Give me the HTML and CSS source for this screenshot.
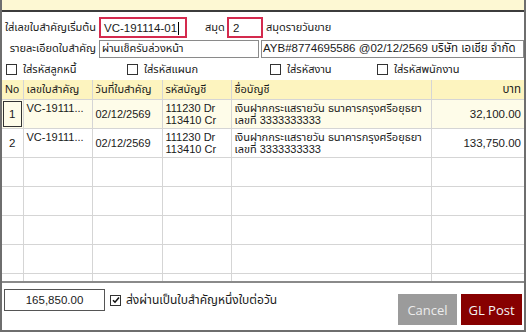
FILE: index.html
```html
<!DOCTYPE html>
<html lang="th">
<head>
  <meta charset="UTF-8" />
  <title>GL Post</title>
  <link rel="stylesheet" href="styles.css">
</head>
<body>
  <div class="window">
    <div class="topbar"></div>

    <div class="form-row row-first">
      <label class="lbl lbl-start">ใส่เลขใบสำคัญเริ่มต้น</label>
      <div class="red-box box-voucher">VC-191114-01<span class="caret"></span></div>
      <label class="lbl lbl-book">สมุด</label>
      <div class="red-box box-book">2</div>
      <span class="book-name">สมุดรายวันขาย</span>
    </div>

    <div class="form-row row-second">
      <label class="lbl lbl-detail">รายละเอียดใบสำคัญ</label>
      <input class="text-in in-detail" type="text" value="ผ่านเช็ครับล่วงหน้า" />
      <input class="text-in in-ref" type="text" value="AYB#8774695586 @02/12/2569 บริษัท เอเชีย จำกัด" />
    </div>

    <div class="checks">
      <label class="chk chk-1"><span class="box"></span>ใส่รหัสลูกหนี้</label>
      <label class="chk chk-2"><span class="box"></span>ใส่รหัสแผนก</label>
      <label class="chk chk-3"><span class="box"></span>ใส่รหัสงาน</label>
      <label class="chk chk-4"><span class="box"></span>ใส่รหัสพนักงาน</label>
    </div>

    <table class="grid">
      <colgroup>
        <col style="width:21px">
        <col style="width:69px">
        <col style="width:70px">
        <col style="width:69px">
        <col style="width:200px">
        <col>
      </colgroup>
      <thead>
        <tr>
          <th>No</th>
          <th>เลขใบสำคัญ</th>
          <th>วันที่ใบสำคัญ</th>
          <th>รหัสบัญชี</th>
          <th>ชื่อบัญชี</th>
          <th class="num">บาท</th>
        </tr>
      </thead>
      <tbody>
        <tr class="sel">
          <td class="no"><span class="focus">1</span></td>
          <td class="top">VC-19111...</td>
          <td>02/12/2569</td>
          <td>111230 Dr<br>113410 Cr</td>
          <td>เงินฝากกระแสรายวัน ธนาคารกรุงศรีอยุธยา<br>เลขที่ 3333333333</td>
          <td class="num">32,100.00</td>
        </tr>
        <tr>
          <td class="no">2</td>
          <td class="top">VC-19111...</td>
          <td>02/12/2569</td>
          <td>111230 Dr<br>113410 Cr</td>
          <td>เงินฝากกระแสรายวัน ธนาคารกรุงศรีอยุธยา<br>เลขที่ 3333333333</td>
          <td class="num">133,750.00</td>
        </tr>
        <tr><td></td><td></td><td></td><td></td><td></td><td></td></tr>
        <tr><td></td><td></td><td></td><td></td><td></td><td></td></tr>
        <tr><td></td><td></td><td></td><td></td><td></td><td></td></tr>
        <tr><td></td><td></td><td></td><td></td><td></td><td></td></tr>
        <tr class="stub"><td></td><td></td><td></td><td></td><td></td><td></td></tr>
      </tbody>
    </table>

    <div class="footer">
      <div class="total">165,850.00</div>
      <label class="chk chk-on"><span class="box checked">
        <svg width="8" height="8" viewBox="0 0 8 8"><path d="M1 4.2 L3 6.2 L7 1.6" fill="none" stroke="#111" stroke-width="1.6"/></svg>
      </span>ส่งผ่านเป็นใบสำคัญหนึ่งใบต่อวัน</label>
      <div class="buttons">
        <button class="btn btn-cancel">Cancel</button>
        <button class="btn btn-post">GL Post</button>
      </div>
    </div>
  </div>
</body>
</html>
```

FILE: styles.css
```css
* {
  box-sizing: border-box;
}

body {
  margin: 0;
  background: #ffffff;
  font-family: Tahoma, "Liberation Sans", "Noto Sans Thai", sans-serif;
  font-size: 11px;
  color: #1a1a1a;
}

.window {
  width: 526px;
  height: 332px;
  border-left: 2px solid #6e6e6e;
  border-right: 2px solid #6e6e6e;
  border-bottom: 2px solid #6e6e6e;
  display: flex;
  flex-direction: column;
}

.topbar {
  height: 12px;
  background: #fdf8d3;
  border-bottom: 2px solid #3c3c3c;
  flex-shrink: 0;
}

/* form rows */
.form-row {
  display: flex;
  align-items: center;
}

.row-first {
  height: 24px;
  margin-top: 3px;
}

.lbl {
  white-space: nowrap;
}

.lbl-start {
  margin-left: 3px;
  width: 94px;
}

.red-box {
  height: 21px;
  border: 2px solid #d42a4e;
  padding: 2px 0 0 3px;
  font-size: 11.5px;
  display: flex;
  align-items: center;
  background: #fff;
}

.box-voucher {
  width: 88px;
}

.caret {
  display: inline-block;
  width: 1px;
  height: 13px;
  background: #000;
  margin-left: 1px;
}

.lbl-book {
  margin-left: 18px;
  width: 22px;
}

.box-book {
  width: 36px;
  padding-left: 4px;
}

.book-name {
  margin-left: 3px;
}

.row-second {
  height: 19px;
}

.lbl-detail {
  width: 97px;
  text-align: right;
  padding-right: 3px;
}

.text-in {
  height: 18px;
  border: 1px solid #8a8a8a;
  font-family: inherit;
  font-size: 11px;
  padding: 0 2px;
  color: #1a1a1a;
  outline: none;
}

.in-detail {
  width: 160px;
}

.in-ref {
  margin-left: 2px;
  flex: 1;
  min-width: 0;
  font-size: 11.5px;
  padding-left: 1px;
}

/* checkboxes */
.checks {
  display: flex;
  height: 22px;
  align-items: center;
  flex-shrink: 0;
}

.chk {
  display: flex;
  align-items: center;
  white-space: nowrap;
}

.box {
  width: 11px;
  height: 11px;
  border: 1px solid #333;
  background: #fff;
  margin-right: 6px;
  display: flex;
  align-items: center;
  justify-content: center;
}

.chk-1 { margin-left: 4px; width: 121px; }
.chk-2 { width: 143px; }
.chk-3 { width: 107px; }

/* grid */
.grid {
  width: 100%;
  border-collapse: collapse;
  table-layout: fixed;
  border-bottom: 2px solid #8a8a8a;
}

.grid th {
  background: #fdf4bf;
  font-weight: normal;
  text-align: left;
  height: 19px;
  padding: 0 3px;
  border-right: 1px solid #d5d5d5;
  border-bottom: 1px solid #d5d5d5;
  white-space: nowrap;
  overflow: hidden;
}

.grid td {
  height: 29px;
  padding: 0 3px;
  border-right: 1px solid #d5d5d5;
  border-bottom: 1px solid #d5d5d5;
  line-height: 12px;
  white-space: nowrap;
  overflow: hidden;
  vertical-align: middle;
}

.grid th:last-child,
.grid td:last-child {
  border-right: none;
}

.grid .num {
  text-align: right;
  padding-right: 3px;
  font-size: 11.5px;
}

.grid td.top {
  vertical-align: top;
  padding-top: 2px;
}

.grid td.no {
  text-align: center;
  padding: 0 1px;
  font-size: 11.5px;
}

.focus {
  display: flex;
  align-items: center;
  justify-content: center;
  height: 26px;
  border: 1px solid #333;
}

.grid tr.sel td {
  background: #fefce9;
}

.grid tr.stub td {
  height: 9px;
}

/* footer */
.footer {
  flex: 1;
  display: flex;
  align-items: flex-start;
  padding: 6px 2px 0 2px;
}

.total {
  width: 101px;
  height: 22px;
  border: 1px solid #555;
  text-align: center;
  line-height: 20px;
  font-size: 11.5px;
}

.chk-on {
  margin-left: 5px;
  height: 22px;
  font-size: 12px;
}

.chk-on .box {
  margin-right: 5px;
}

.buttons {
  margin-left: auto;
  margin-top: 5px;
  display: flex;
  gap: 4px;
}

.btn {
  border: none;
  height: 31px;
  font-family: "Open Sans", "Liberation Sans", sans-serif;
  font-size: 13px;
  font-weight: 400;
  padding: 0;
}

.btn-cancel {
  width: 59px;
  background: #9b9b9b;
  color: #ececec;
}

.btn-post {
  width: 61px;
  background: #870000;
  color: #f4f4f4;
}
```
